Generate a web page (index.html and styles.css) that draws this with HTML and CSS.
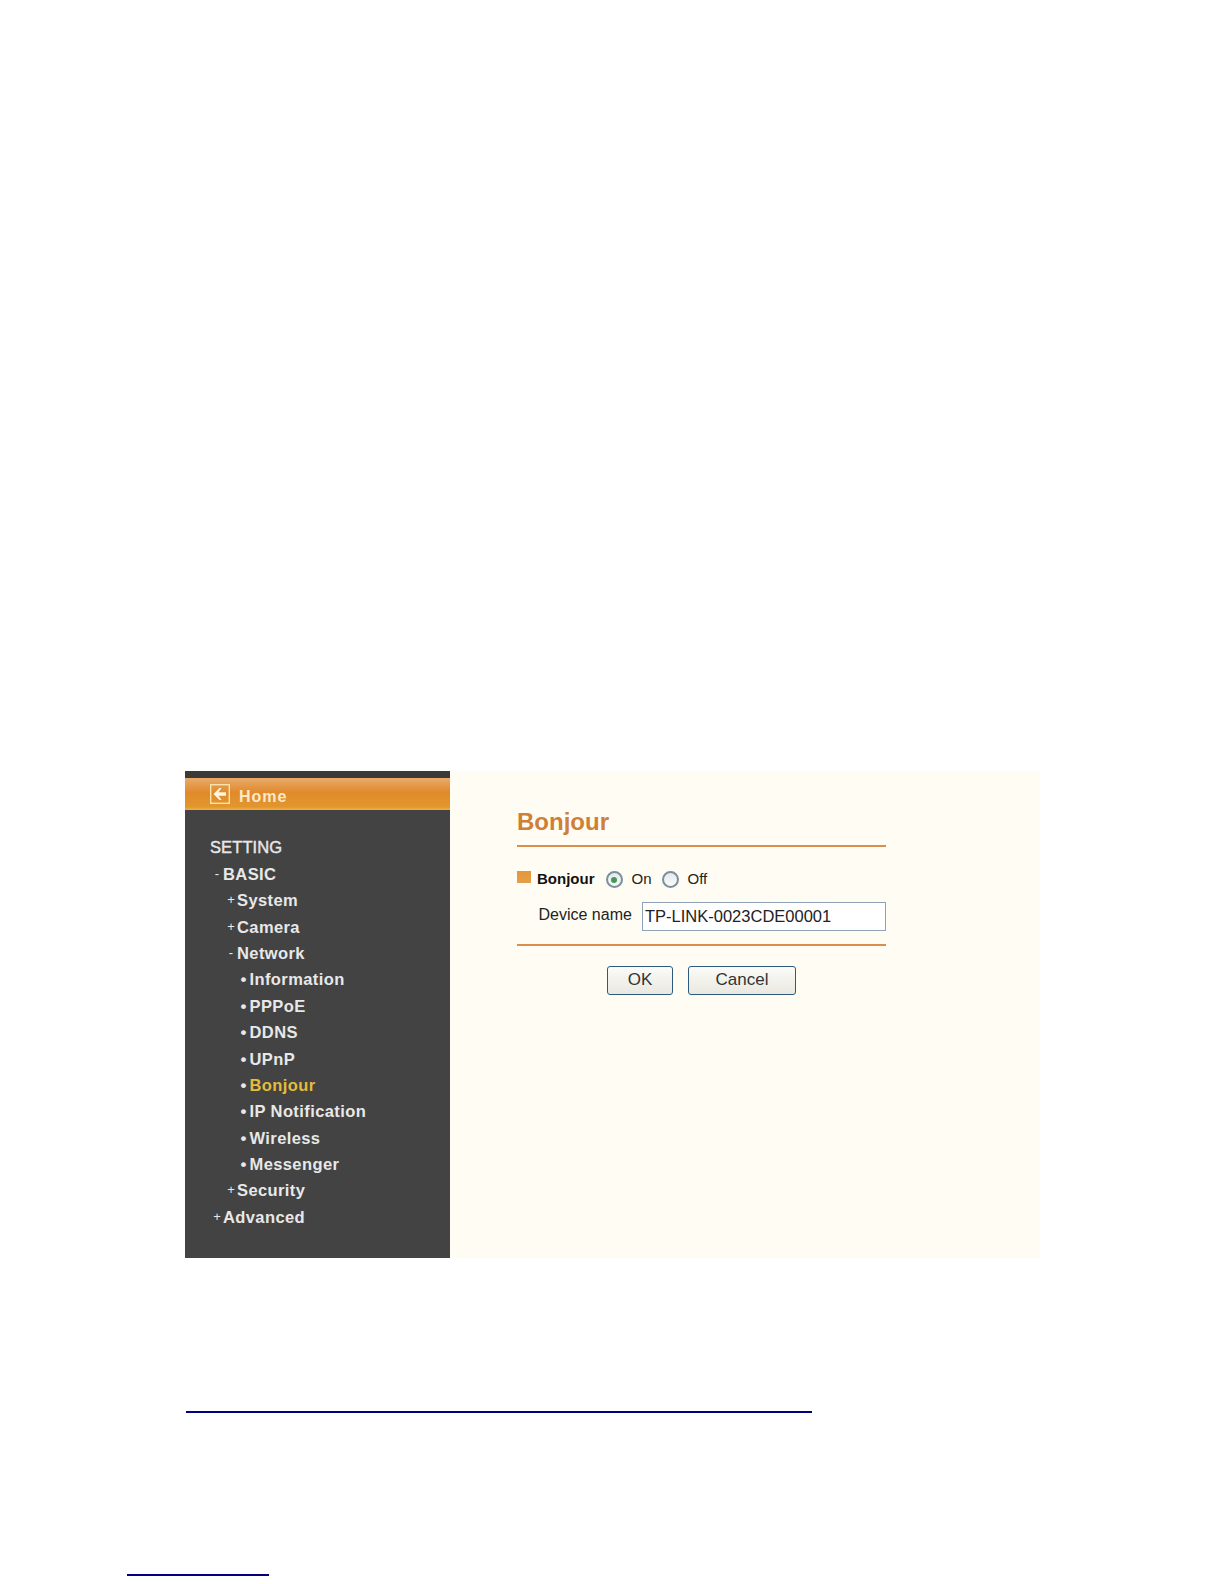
FILE: index.html
```html
<!DOCTYPE html>
<html lang="en">
<head>
	<meta charset="utf-8">
	<title>Bonjour</title>
	<link rel="stylesheet" href="styles.css">
</head>
<body>
	<div class="shot">
		<div class="side">
			<div class="homeBar">
				<svg class="homeIcon" width="20" height="20" viewBox="0 0 20 20">
					<rect x=".7" y=".7" width="18.6" height="18.6" fill="none" stroke="#fbe3a8" stroke-width="1.4"/>
					<path d="M3.5 10 L9.5 4 L11.5 4 L8.5 8.3 L16 8.3 L16 11.7 L8.5 11.7 L11.5 16 L9.5 16 Z" fill="#fff6e0"/>
				</svg>
				<span class="homeText">Home</span>
			</div>
			<ul class="menu">
				<li class="lv0">SETTING</li>
				<li class="lv1"><i>-</i>BASIC</li>
				<li class="lv2"><i>+</i>System</li>
				<li class="lv2"><i>+</i>Camera</li>
				<li class="lv2"><i>-</i>Network</li>
				<li class="lv3"><i>•</i>Information</li>
				<li class="lv3"><i>•</i>PPPoE</li>
				<li class="lv3"><i>•</i>DDNS</li>
				<li class="lv3"><i>•</i>UPnP</li>
				<li class="lv3 cur"><i>•</i>Bonjour</li>
				<li class="lv3"><i>•</i>IP Notification</li>
				<li class="lv3"><i>•</i>Wireless</li>
				<li class="lv3"><i>•</i>Messenger</li>
				<li class="lv2"><i>+</i>Security</li>
				<li class="lv1"><i>+</i>Advanced</li>
			</ul>
		</div>
		<div class="main">
			<h1 class="titleP">Bonjour</h1>
			<div class="onRow">
				<span class="mark"></span>
				<b class="onLabel">Bonjour</b>
				<span class="radio checked"></span>
				<span class="radioText">On</span>
				<span class="radio"></span>
				<span class="radioText">Off</span>
			</div>
			<div class="nameRow">
				<label class="nameLabel">Device name</label>
				<div class="nameInput">TP-LINK-0023CDE00001</div>
			</div>
			<div class="btnRow">
				<div class="btn okBtn">OK</div>
				<div class="btn cancelBtn">Cancel</div>
			</div>
		</div>
	</div>
	<div class="linkLine"></div>
	<div class="noteLine"></div>
</body>
</html>
```

FILE: styles.css
```css
html,body{margin: 0;padding: 0;background: #fff;}
body{height: 1584px;overflow: hidden;padding-top: 771px;box-sizing: border-box;font-family: "Liberation Sans",Arial,sans-serif;}
.shot{display: flex;width: 855px;height: 487px;margin-left: 185px;background: #fffdf3;}
.side{width: 265px;background: #434343;border-top: 7px solid #3d3936;box-sizing: border-box;}
.homeBar{display: flex;align-items: center;height: 32px;padding-left: 25px;background: linear-gradient(#e9ab6a 0,#e08a2c 45%,#e3962d 90%,#f0b040 100%);}
.homeIcon{display: block;}
.homeText{margin: 6px 0 0 9px;font-size: 16px;font-weight: bold;letter-spacing: 1px;color: #fbe9c8;}
.menu{list-style: none;margin: 0;padding: 24.4px 0 0;}
.menu li{height: 26.4px;line-height: 26px;font-size: 16.5px;font-weight: bold;letter-spacing: .4px;color: #e8e8e8;white-space: nowrap;}
.menu li i{display: inline-block;width: 12px;font-style: normal;font-size: 13px;font-weight: normal;letter-spacing: 0;text-align: center;vertical-align: 2px;}
.menu li.lv3 i{font-size: 17px;font-weight: bold;vertical-align: 0;}
.lv0{padding-left: 25px;}
.menu .lv0{font-weight: normal;-webkit-text-stroke: .4px #e8e8e8;letter-spacing: .1px;}
.lv1{padding-left: 26px;}
.lv2{padding-left: 40px;}
.lv3{padding-left: 52.5px;}
.menu .cur{color: #e6bb3c;}
.menu .cur i{color: #e8e8e8;}
.main{flex: 1;padding: 0 0 0 67px;}
.titleP{width: 369px;height: 76px;margin: 0;box-sizing: border-box;padding-top: 36px;line-height: 30px;font-size: 24px;font-weight: bold;color: #cf7f37;border-bottom: 2px solid #d98e4e;}
.onRow{display: flex;align-items: center;width: 369px;height: 32px;margin-top: 16px;font-size: 15px;color: #222;}
.mark{width: 14px;height: 12px;margin-top: -4px;background: linear-gradient(#e8963a,#e0a04a);}
.onLabel{margin: -2px 0 0 6px;font-size: 15px;color: #111;}
.radio{width: 17px;height: 17px;margin-left: 11px;margin-top: 1px;border: 2px solid #7b909c;border-radius: 50%;background: linear-gradient(#e6e8ee,#fbfbf8);box-sizing: border-box;position: relative;}
.radio.checked::after{content: "";position: absolute;left: 3.5px;top: 3.5px;width: 6px;height: 6px;border-radius: 50%;background: #3f9a55;}
.radioText{margin: -1px 0 0 9px;}
.onRow .radioText + .radio{margin-left: 10px;}
.nameRow{display: flex;align-items: center;width: 369px;height: 29px;margin-top: 7px;}
.nameLabel{width: 125px;padding-left: 21.5px;box-sizing: border-box;margin-top: -3px;font-size: 16px;color: #222;}
.nameInput{width: 244px;height: 29px;line-height: 27px;padding-left: 2px;box-sizing: border-box;border: 1px solid #8ea2b8;background: #fff;font-size: 16.5px;color: #222;white-space: nowrap;}
.btnRow{display: flex;gap: 15px;width: 369px;height: 52px;box-sizing: border-box;padding: 20px 0 0 90px;margin-top: 12.5px;border-top: 2.5px solid #d98e4e;}
.btn{height: 29px;line-height: 26px;box-sizing: border-box;text-align: center;border: 1.5px solid #2f5a80;border-radius: 3px;background: linear-gradient(#fbfbf8,#e9e8e0);font-size: 17px;color: #333;}
.okBtn{width: 66px;}
.cancelBtn{width: 108px;}
.linkLine{width: 626px;height: 2px;margin: 153px 0 0 186px;background: #000080;}
.noteLine{width: 142px;height: 2px;margin: 161px 0 0 127px;background: #000080;}
```
